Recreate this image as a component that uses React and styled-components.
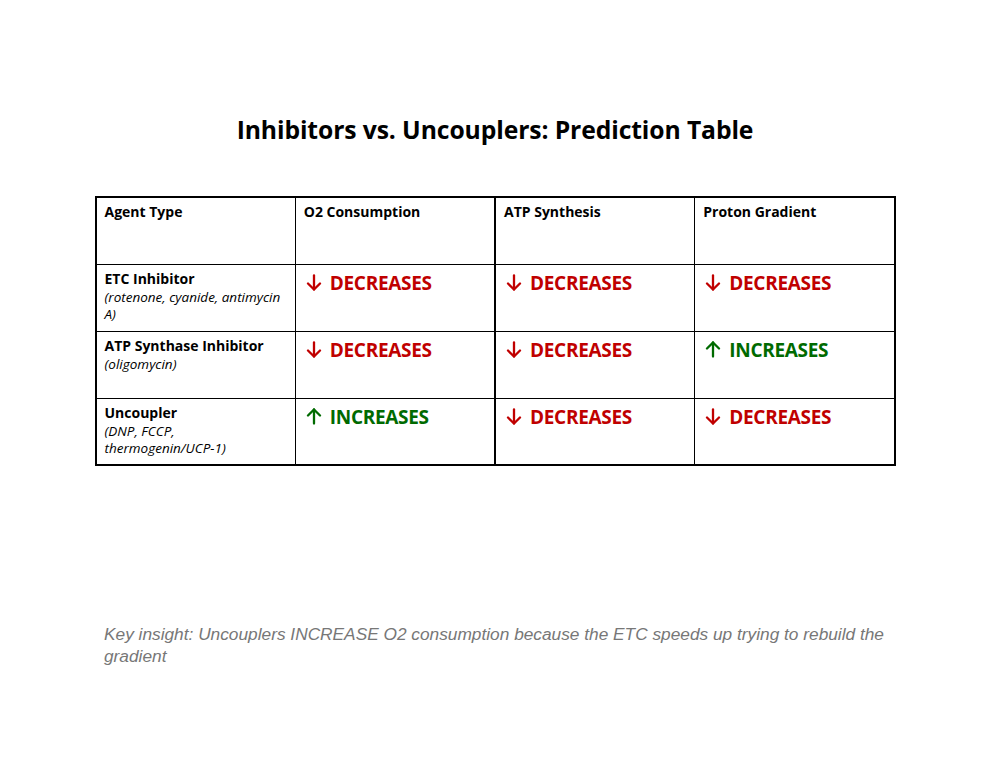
import React from "react";
import styled, { createGlobalStyle } from "styled-components";

const GlobalStyle = createGlobalStyle`
  body {
    margin: 0;
    background: #ffffff;
  }
`;

const Page = styled.div`
  width: 990px;
  height: 765px;
  padding-top: 111px;
  box-sizing: border-box;
  display: flex;
  flex-direction: column;
  align-items: center;
  font-family: "Open Sans", "Liberation Sans", sans-serif;
  color: #000;
`;

const Title = styled.h1`
  margin: 0;
  font-size: 24.7px;
  font-weight: 700;
  line-height: 38px;
  letter-spacing: -0.1px;
`;

const Table = styled.table`
  margin-top: 47px;
  width: 801px;
  border-collapse: collapse;
  border: 2px solid #000;
  table-layout: fixed;
`;

const Cell = styled.td`
  height: 67px;
  box-sizing: border-box;
  border: 1px solid #000;
  border-left-width: ${({ $thick }) => ($thick ? "2px" : "1px")};
  padding: 4px 8px;
  vertical-align: top;
  text-align: left;
`;

const HeadCell = styled(Cell).attrs({ as: "th" })`
  font-size: 14px;
  font-weight: 700;
  line-height: 20px;
`;

const AgentName = styled.div`
  font-size: 14px;
  font-weight: 700;
  line-height: 20px;
`;

const AgentNote = styled.div`
  font-size: 13.5px;
  font-style: italic;
  line-height: 17px;
`;

const Effect = styled.div`
  display: flex;
  align-items: center;
  gap: 8px;
  font-size: 19px;
  font-weight: 700;
  line-height: 28px;
  letter-spacing: -0.3px;
  color: ${({ $up }) => ($up ? "#006a00" : "#c00000")};

  svg {
    flex: none;
    margin-left: 2px;
  }
`;

const Footer = styled.p`
  margin: 157px 0 0;
  width: 800px;
  padding-left: 9px;
  box-sizing: border-box;
  font-family: "Liberation Sans", Arial, sans-serif;
  font-size: 17.3px;
  font-style: italic;
  line-height: 22px;
  color: #777777;
`;

const Arrow = ({ up }) => (
  <svg width="16" height="17" viewBox="0 0 16 17" fill="none">
    <g
      stroke="currentColor"
      strokeWidth="2.3"
      strokeLinecap="round"
      strokeLinejoin="round"
      transform={up ? "rotate(180 8 8.5)" : undefined}
    >
      <line x1="8" y1="1.5" x2="8" y2="15.5" />
      <polyline points="2,9.5 8,15.5 14,9.5" />
    </g>
  </svg>
);

const columns = ["Agent Type", "O2 Consumption", "ATP Synthesis", "Proton Gradient"];

const rows = [
  {
    name: "ETC Inhibitor",
    note: "(rotenone, cyanide, antimycin A)",
    effects: [false, false, false],
  },
  {
    name: "ATP Synthase Inhibitor",
    note: "(oligomycin)",
    effects: [false, false, true],
  },
  {
    name: "Uncoupler",
    note: "(DNP, FCCP, thermogenin/UCP-1)",
    effects: [true, false, false],
  },
];

const App = () => {
  return (
    <Page>
      <GlobalStyle />
      <Title>Inhibitors vs. Uncouplers: Prediction Table</Title>
      <Table>
        <thead>
          <tr>
            {columns.map((c, i) => (
              <HeadCell key={c} $thick={i === 2}>
                {c}
              </HeadCell>
            ))}
          </tr>
        </thead>
        <tbody>
          {rows.map((r) => (
            <tr key={r.name}>
              <Cell>
                <AgentName>{r.name}</AgentName>
                <AgentNote>{r.note}</AgentNote>
              </Cell>
              {r.effects.map((up, i) => (
                <Cell key={i} $thick={i === 1}>
                  <Effect $up={up}>
                    <Arrow up={up} />
                    {up ? "INCREASES" : "DECREASES"}
                  </Effect>
                </Cell>
              ))}
            </tr>
          ))}
        </tbody>
      </Table>
      <Footer>
        Key insight: Uncouplers INCREASE O2 consumption because the ETC speeds up
        trying to rebuild the gradient
      </Footer>
    </Page>
  );
};

export default App;
